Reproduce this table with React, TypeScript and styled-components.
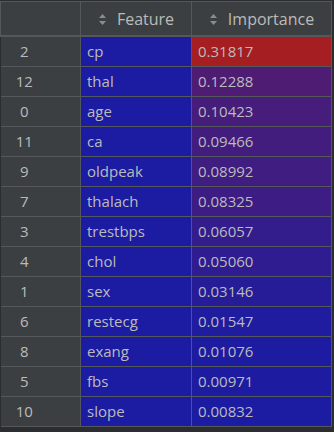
import styled, { createGlobalStyle } from "styled-components";

const rows: [number, string, number][] = [
  [2, "cp", 0.31817],
  [12, "thal", 0.12288],
  [0, "age", 0.10423],
  [11, "ca", 0.09466],
  [9, "oldpeak", 0.08992],
  [7, "thalach", 0.08325],
  [3, "trestbps", 0.06057],
  [4, "chol", 0.0506],
  [1, "sex", 0.03146],
  [6, "restecg", 0.01547],
  [8, "exang", 0.01076],
  [5, "fbs", 0.00971],
  [10, "slope", 0.00832],
];

const BLUE = [28, 28, 162];
const RED = [164, 30, 34];

const heat = (v: number) => {
  const min = 0.00832;
  const max = 0.31817;
  const t = (v - min) / (max - min);
  const c = BLUE.map((b, i) => Math.round(b + (RED[i] - b) * t));
  return `rgb(${c.join(",")})`;
};

const SortIcon = () => (
  <svg width="9" height="13" viewBox="0 0 9 13">
    <path d="M4.5 1 L8 5 H1 Z" fill="#8a8c8e" />
    <path d="M4.5 12 L8 8 H1 Z" fill="#8a8c8e" />
  </svg>
);

export default function App() {
  return (
    <>
      <GlobalStyle />
      <Page>
        <Table>
          <colgroup>
            <col style={{ width: 80 }} />
            <col style={{ width: 111 }} />
            <col style={{ width: 140 }} />
          </colgroup>
          <thead>
            <tr>
              <HeadCell />
              <HeadCell>
                <HeadLabel>
                  <SortIcon />
                  Feature
                </HeadLabel>
              </HeadCell>
              <HeadCell>
                <HeadLabel>
                  <SortIcon />
                  Importance
                </HeadLabel>
              </HeadCell>
            </tr>
          </thead>
          <tbody>
            {rows.map(([idx, name, val]) => (
              <tr key={idx}>
                <IndexCell>{idx}</IndexCell>
                <FeatureCell>{name}</FeatureCell>
                <ValueCell style={{ background: heat(val) }}>
                  {val.toFixed(5)}
                </ValueCell>
              </tr>
            ))}
          </tbody>
        </Table>
      </Page>
    </>
  );
}

const GlobalStyle = createGlobalStyle`
  body {
    margin: 0;
    background: #2b2d30;
    font-family: "Open Sans", "Noto Sans", sans-serif;
  }
`;

const Page = styled.div`
  padding-top: 1px;
  width: 334px;
  height: 432px;
  box-sizing: border-box;
  overflow: hidden;
`;

const Table = styled.table`
  border-collapse: collapse;
  table-layout: fixed;
  width: 331px;
  font-size: 15px;
  color: #bbbbbb;
`;

const HeadCell = styled.th`
  height: 33px;
  padding: 0;
  background: #3c3f41;
  border: 1px solid #55585b;
  border-bottom: 2px solid #55585b;
  font-weight: 400;
  font-size: 16px;
`;

const HeadLabel = styled.div`
  display: flex;
  align-items: center;
  justify-content: center;
  gap: 10px;
  padding-top: 1px;
`;

const Cell = styled.td`
  height: 29px;
  padding: 0 0 0 6px;
  border: 1px solid #55585b;
  box-sizing: border-box;
  line-height: 29px;
`;

const IndexCell = styled(Cell)`
  background: #3c3f41;
  padding: 0 32px 0 0;
  text-align: center;
  border-left: none;
`;

const FeatureCell = styled(Cell)`
  background: #1c1ca2;
`;

const ValueCell = styled(Cell)``;
